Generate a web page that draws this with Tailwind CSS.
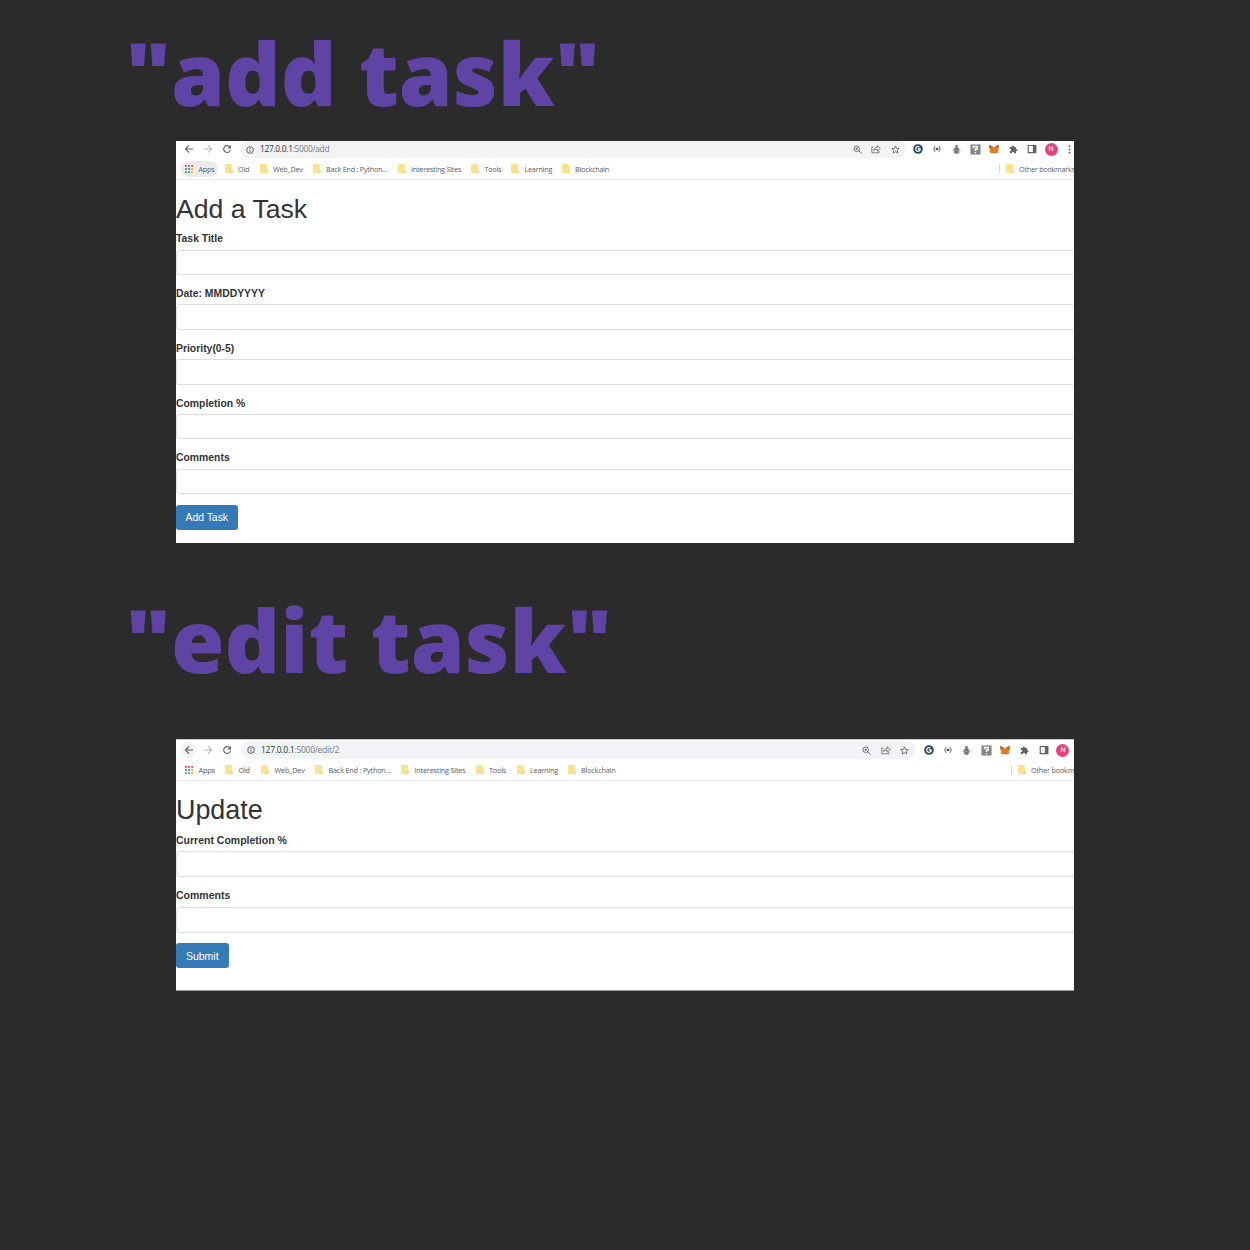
<!DOCTYPE html>
<html lang="en">
<head>
<meta charset="utf-8">
<title>Task forms</title>
<script src="https://cdn.jsdelivr.net/npm/@tailwindcss/browser@4"></script>
</head>
<body class="bg-[#2b2b2b]">
<svg class="hidden">
  <symbol id="back" viewBox="0 0 24 24"><path fill="none" stroke="currentColor" stroke-width="2.6" d="M22 12H4M12 3.500 3.500 12l8.500 8.500"/></symbol>
  <symbol id="fwd" viewBox="0 0 24 24"><path fill="none" stroke="currentColor" stroke-width="2.6" d="M2 12h18M12 3.500l8.500 8.500-8.500 8.500"/></symbol>
  <symbol id="reload" viewBox="0 0 24 24"><path fill="none" stroke="currentColor" stroke-width="2.6" d="M19 7.5A8.2 8.2 0 1 0 20.200 14"/><path fill="currentColor" d="M21.500 2.500v8.500h-8.500z"/></symbol>
  <symbol id="info" viewBox="0 0 24 24"><circle cx="12" cy="12" r="10" fill="none" stroke="currentColor" stroke-width="3"/><path stroke="currentColor" stroke-width="3" d="M12 11v6.500M12 6v3"/></symbol>
  <symbol id="apps" viewBox="0 0 9 9"><path fill="#e8453c" d="M0 0h2v2H0zM3.500 0h2v2h-2zM7 0h2v2H7z"/><path fill="#34a853" d="M0 3.500h2v2H0z"/><path fill="#4285f4" d="M3.500 3.500h2v2h-2z"/><path fill="#f5b32b" d="M7 3.500h2v2H7zM7 7h2v2H7z"/><path fill="#34a853" d="M0 7h2v2H0zM3.500 7h2v2h-2z"/></symbol>
  <symbol id="folder" viewBox="0 0 8 9"><path fill="#ffe290" d="M.8 0h5.400q.8 0 .8.800V6l.7.600V8.200q0 .8-.8.800H.8Q0 9 0 8.200V.8Q0 0 .8 0z"/><path fill="#fad777" d="M5.600 7.200 7 6l.7.600v1.600q0 .8-.8.800h-1.300z"/></symbol>
  <symbol id="zoom" viewBox="0 0 24 24"><g fill="none" stroke="currentColor" stroke-width="2.300"><circle cx="10" cy="10" r="7.500"/><path d="m15 15 8 8M6.500 10h7M10 6.500v7"/></g></symbol>
  <symbol id="share" viewBox="0 0 24 24"><g fill="none" stroke="currentColor" stroke-width="1.900"><path d="M6 7H2v14h17v-5"/><path d="M6 16c1-5 4-7.500 9-7.500V4l7.500 6.500L15 17v-4.500c-4 0-6.500 1-9 3.500z"/></g></symbol>
  <symbol id="star" viewBox="0 0 24 24"><path fill="none" stroke="currentColor" stroke-width="2.300" d="m12 2.500 2.900 6.500 7 .7-5.300 4.700 1.600 7L12 17.700 5.800 21.400l1.600-7L2.100 9.700l7-.7z"/></symbol>
  <symbol id="ring" viewBox="0 0 24 24"><circle cx="12" cy="12" r="11.500" fill="#2b4a63"/><path fill="none" stroke="#fff" stroke-width="3" d="M15.500 7.500A5.600 5.600 0 1 0 17.500 13H12.500"/><circle cx="14" cy="11" r="2" fill="#fff"/></symbol>
  <symbol id="braces" viewBox="0 0 24 24"><g fill="none" stroke="#4d4f52" stroke-width="2.600"><path d="M7 4Q4 4 4 8 4 12 1.500 12 4 12 4 16 4 20 7 20M17 4q3 0 3 4 0 4 2.500 4-2.500 0-2.500 4 0 4-3 4"/></g><path fill="#4d4f52" d="M8 8.500h8v7H8z"/></symbol>
  <symbol id="bug" viewBox="0 0 24 24"><g fill="#777"><path d="M9 0h6v6H9z"/><ellipse cx="12" cy="14.500" rx="7" ry="9"/></g><path fill="none" stroke="#999" stroke-width="2" d="M2 9l5 3M22 9l-5 3M1 14.500h22M3 20l4-3M21 20l-4-3"/></symbol>
  <symbol id="quest" viewBox="0 0 24 24"><path fill="#858585" d="M1 1h22v22H1z"/><path fill="none" stroke="#fff" stroke-width="3" d="M7.500 9V5.500h8.500V11h-4v4.500"/><path fill="#fff" d="M10.500 17.500h3v3h-3z"/></symbol>
  <symbol id="fox" viewBox="0 0 24 24"><path fill="#e8812c" d="m1 1.500 8 5h6l8-5 .5 9-2 4 1.500 5-5 3-4-1h-4l-4 1-5-3 1.500-5L.500 10.500z"/><path fill="#b3601f" d="m1 1.500 8 5-4 2.500-4 1zM23 1.500l-8 5 4 2.500 4 1z"/><path fill="#5b4a40" d="m6 12.500 4 2-3 .5zM18 12.500l-4 2 3 .5zM10 19h4l-.500 2h-3z"/></symbol>
  <symbol id="puzzle" viewBox="0 0 24 24"><path fill="#5f6368" d="M20.500 11H19V7a2 2 0 0 0-2-2h-4V3.500a2.500 2.500 0 0 0-5 0V5H4a2 2 0 0 0-2 2v3.800h1.500a2.700 2.700 0 0 1 0 5.400H2V20a2 2 0 0 0 2 2h3.800v-1.500a2.700 2.700 0 0 1 5.400 0V22H17a2 2 0 0 0 2-2v-4h1.500a2.500 2.500 0 0 0 0-5z"/></symbol>
  <symbol id="side" viewBox="0 0 24 24"><path fill="none" stroke="#5f6368" stroke-width="2.800" d="M3 3.500h18v17H3z"/><path fill="#5f6368" d="M14 3h8v18h-8z"/></symbol>
  <symbol id="dots" viewBox="0 0 24 24"><g fill="#5f6368"><circle cx="12" cy="3.500" r="2.600"/><circle cx="12" cy="12" r="2.600"/><circle cx="12" cy="20.500" r="2.600"/></g></symbol>
</svg>

<main class="flex h-[1250px] w-[1250px] flex-col overflow-hidden border-b border-[#30272b] font-['Liberation_Sans',sans-serif] text-[#333]">
  <h2 class="h-[141px] pt-[13px] pl-[125.500px] font-['Open_Sans',sans-serif] text-[86.700px] leading-[119px] font-extrabold whitespace-nowrap text-[#5f43a5]">"add task"</h2>

  <section class="ml-[176px] h-[402px] w-[897.500px] shrink-0 overflow-hidden bg-white">
    <div class="flex h-[17px] items-center text-[#5f6368]">
      <div class="flex h-[16px] w-[64px] shrink-0 items-center self-start pl-2">
        <svg class="mr-[9px] size-[10px]"><use href="#back"/></svg>
        <svg class="mr-[9px] size-[10px] text-[#b8babd]"><use href="#fwd"/></svg>
        <svg class="size-[10px]"><use href="#reload"/></svg>
      </div>
      <div class="flex h-[17px] w-[666px] shrink-0 items-center rounded-full bg-[#f1f3f4] pl-[6px]">
        <svg class="mr-[6px] size-[8px]"><use href="#info"/></svg>
        <span class="font-['Open_Sans',sans-serif] text-[8.400px] leading-none tracking-[-0.300px] text-[#777b80]"><span class="text-[#303134]">127.0.0.1</span>:5000/add</span>
        <div class="mr-[1.500px] ml-auto flex h-[16px] items-center self-start">
          <span class="flex w-[19px] justify-center"><svg class="size-[9px]"><use href="#zoom"/></svg></span>
          <span class="flex w-[19px] justify-center"><svg class="size-[10px]"><use href="#share"/></svg></span>
          <span class="flex w-[19px] justify-center"><svg class="size-[9px]"><use href="#star"/></svg></span>
        </div>
      </div>
      <div class="ml-[2.500px] flex h-[16px] shrink-0 items-center self-start">
        <span class="flex w-[19px] justify-center"><svg class="size-[10px]"><use href="#ring"/></svg></span>
        <span class="flex w-[19px] justify-center"><svg class="size-[8px]"><use href="#braces"/></svg></span>
        <span class="flex w-[19px] justify-center"><svg class="size-[9px]"><use href="#bug"/></svg></span>
        <span class="flex w-[19px] justify-center"><svg class="size-[11px]"><use href="#quest"/></svg></span>
        <span class="flex w-[19px] justify-center"><svg class="size-[10px]"><use href="#fox"/></svg></span>
        <span class="flex w-[19px] justify-center"><svg class="size-[9px]"><use href="#puzzle"/></svg></span>
        <span class="flex w-[19px] justify-center"><svg class="size-[10px]"><use href="#side"/></svg></span>
        <span class="flex w-[19px] justify-center"><span class="flex size-[13px] items-center justify-center rounded-full bg-[#ec407a] font-['Roboto',sans-serif] text-[7px] text-white">N</span></span>
        <span class="flex w-[18px] justify-center"><svg class="size-[9px]"><use href="#dots"/></svg></span>
      </div>
    </div>
    <div class="flex h-[22px] items-center border-b border-[#e8eaed] pl-[5px] font-['Open_Sans',sans-serif] text-[7.200px] leading-[12px] tracking-[-0.210px] whitespace-nowrap text-[#5a5d61]">
      <span class="mr-[6.500px] flex h-4 w-[37px] shrink-0 items-center rounded-full bg-[#ebebeb] pl-1"><svg class="mr-[5.500px] size-[8px]"><use href="#apps"/></svg><span class="pt-px">Apps</span></span>
      <span class="flex w-[35px] shrink-0 items-center"><svg class="mr-[5.500px] h-[9px] w-[8px]"><use href="#folder"/></svg><span class="pt-px">Old</span></span>
      <span class="flex w-[53px] shrink-0 items-center"><svg class="mr-[5.500px] h-[9px] w-[8px]"><use href="#folder"/></svg><span class="pt-px">Web_Dev</span></span>
      <span class="flex w-[85px] shrink-0 items-center"><svg class="mr-[5.500px] h-[9px] w-[8px]"><use href="#folder"/></svg><span class="pt-px">Back End : Python...</span></span>
      <span class="flex w-[73.500px] shrink-0 items-center"><svg class="mr-[5.500px] h-[9px] w-[8px]"><use href="#folder"/></svg><span class="pt-px">Interesting Sites</span></span>
      <span class="flex w-[40px] shrink-0 items-center"><svg class="mr-[5.500px] h-[9px] w-[8px]"><use href="#folder"/></svg><span class="pt-px">Tools</span></span>
      <span class="flex w-[50.500px] shrink-0 items-center"><svg class="mr-[5.500px] h-[9px] w-[8px]"><use href="#folder"/></svg><span class="pt-px">Learning</span></span>
      <span class="flex w-[437px] shrink-0 items-center"><svg class="mr-[5.500px] h-[9px] w-[8px]"><use href="#folder"/></svg><span class="pt-px">Blockchain</span></span>
      <span class="flex h-[9px] shrink-0 items-center border-l border-[#d5d7da] pl-[6px]"><svg class="mr-[5.500px] h-[9px] w-[8px]"><use href="#folder"/></svg><span class="pt-px">Other bookmarks</span></span>
    </div>
    <h1 class="mt-[14px] h-[39px] text-[26.600px] leading-[30px]">Add a Task</h1>
    <div class="h-[54.750px] w-[910px]"><label class="block h-[16.500px] text-[10.400px] leading-[12px] font-bold">Task Title</label><div class="h-[25.500px] rounded-[3px] border border-[#dedede]"></div></div>
    <div class="h-[54.750px] w-[910px]"><label class="block h-[16.500px] text-[10.400px] leading-[12px] font-bold">Date: MMDDYYYY</label><div class="h-[25.500px] rounded-[3px] border border-[#dedede]"></div></div>
    <div class="h-[54.750px] w-[910px]"><label class="block h-[16.500px] text-[10.400px] leading-[11px] font-bold">Priority(0-5)</label><div class="h-[25.500px] rounded-[3px] border border-[#dedede]"></div></div>
    <div class="h-[54.750px] w-[910px]"><label class="block h-[16.500px] text-[10.400px] leading-[13px] font-bold">Completion %</label><div class="h-[25.500px] rounded-[3px] border border-[#dedede]"></div></div>
    <div class="h-[52.500px] w-[910px]"><label class="block h-[16.500px] text-[10.400px] leading-[12px] font-bold">Comments</label><div class="h-[25.500px] rounded-[3px] border border-[#dedede]"></div></div>
    <button class="block h-[25.500px] w-[61.500px] rounded-[3px] bg-[#337ab7] pt-[1.500px] text-[10.400px] leading-none text-white">Add Task</button>
  </section>

  <h2 class="h-[195.500px] pt-[37px] pl-[125.500px] font-['Open_Sans',sans-serif] text-[86.700px] leading-[119px] font-extrabold whitespace-nowrap text-[#5f43a5]">"edit task"</h2>

  <section class="ml-[176px] h-[252.500px] w-[897.500px] shrink-0 overflow-hidden border-t border-b border-t-[#c8c8c8] border-b-[#999] bg-white">
    <div class="flex h-[20px] items-center pt-[1px] text-[#5f6368]">
      <div class="flex w-[65px] shrink-0 items-center pl-[5px]">
        <span class="mr-[6px] flex size-[16px] items-center justify-center rounded-full bg-[#f1f3f4]"><svg class="size-[10px]"><use href="#back"/></svg></span>
        <svg class="mr-[9px] size-[10px] text-[#b8babd]"><use href="#fwd"/></svg>
        <svg class="size-[10px]"><use href="#reload"/></svg>
      </div>
      <div class="flex h-[18px] w-[675px] shrink-0 items-center rounded-full bg-[#f1f3f4] pl-[6px]">
        <svg class="mr-[6px] size-[8px]"><use href="#info"/></svg>
        <span class="pt-px font-['Open_Sans',sans-serif] text-[8.500px] leading-none tracking-[-0.270px] text-[#777b80]"><span class="text-[#303134]">127.0.0.1</span>:5000/edit/2</span>
        <div class="mr-[1.500px] ml-auto flex items-center">
          <span class="flex w-[19.200px] justify-center"><svg class="size-[9px]"><use href="#zoom"/></svg></span>
          <span class="flex w-[19.200px] justify-center"><svg class="size-[10px]"><use href="#share"/></svg></span>
          <span class="flex w-[19.200px] justify-center"><svg class="size-[9px]"><use href="#star"/></svg></span>
        </div>
      </div>
      <div class="ml-[3px] flex shrink-0 items-center">
        <span class="flex w-[19.200px] justify-center"><svg class="size-[10px]"><use href="#ring"/></svg></span>
        <span class="flex w-[19.200px] justify-center"><svg class="size-[8px]"><use href="#braces"/></svg></span>
        <span class="flex w-[19.200px] justify-center"><svg class="size-[9px]"><use href="#bug"/></svg></span>
        <span class="flex w-[19.200px] justify-center"><svg class="size-[11px]"><use href="#quest"/></svg></span>
        <span class="flex w-[19.200px] justify-center"><svg class="size-[10px]"><use href="#fox"/></svg></span>
        <span class="flex w-[19.200px] justify-center"><svg class="size-[9px]"><use href="#puzzle"/></svg></span>
        <span class="flex w-[19.200px] justify-center"><svg class="size-[10px]"><use href="#side"/></svg></span>
        <span class="flex w-[19.200px] justify-center"><span class="flex size-[13px] items-center justify-center rounded-full bg-[#ec407a] font-['Roboto',sans-serif] text-[7px] text-white">N</span></span>
      </div>
    </div>
    <div class="flex h-[21.500px] items-center border-b border-[#e8eaed] pl-[9px] font-['Open_Sans',sans-serif] text-[7.300px] leading-[12px] tracking-[-0.210px] whitespace-nowrap text-[#5a5d61]">
      <span class="flex w-[40px] shrink-0 items-center"><svg class="mr-[5.500px] size-[8px]"><use href="#apps"/></svg>Apps</span>
      <span class="flex w-[36px] shrink-0 items-center"><svg class="mr-[5.500px] h-[9px] w-[8px]"><use href="#folder"/></svg>Old</span>
      <span class="flex w-[54px] shrink-0 items-center"><svg class="mr-[5.500px] h-[9px] w-[8px]"><use href="#folder"/></svg>Web_Dev</span>
      <span class="flex w-[86px] shrink-0 items-center"><svg class="mr-[5.500px] h-[9px] w-[8px]"><use href="#folder"/></svg>Back End : Python...</span>
      <span class="flex w-[74.500px] shrink-0 items-center"><svg class="mr-[5.500px] h-[9px] w-[8px]"><use href="#folder"/></svg>Interesting Sites</span>
      <span class="flex w-[41px] shrink-0 items-center"><svg class="mr-[5.500px] h-[9px] w-[8px]"><use href="#folder"/></svg>Tools</span>
      <span class="flex w-[51px] shrink-0 items-center"><svg class="mr-[5.500px] h-[9px] w-[8px]"><use href="#folder"/></svg>Learning</span>
      <span class="flex w-[443px] shrink-0 items-center"><svg class="mr-[5.500px] h-[9px] w-[8px]"><use href="#folder"/></svg>Blockchain</span>
      <span class="flex h-[9px] shrink-0 items-center border-l border-[#d5d7da] pl-[6px]"><svg class="mr-[5.500px] h-[9px] w-[8px]"><use href="#folder"/></svg>Other bookmarks</span>
    </div>
    <h1 class="mt-[14px] h-[39px] text-[26.900px] leading-[31px]">Update</h1>
    <div class="h-[55.500px] w-[910px]"><label class="block h-[17px] text-[10.500px] leading-[12px] font-bold">Current Completion %</label><div class="h-[26px] rounded-[3px] border border-[#dedede]"></div></div>
    <div class="h-[53px] w-[910px]"><label class="block h-[17px] text-[10.500px] leading-[11px] font-bold">Comments</label><div class="h-[26px] rounded-[3px] border border-[#dedede]"></div></div>
    <button class="block h-[25.500px] w-[52.500px] rounded-[3px] bg-[#337ab7] pt-[1.500px] text-[10.500px] leading-none text-white">Submit</button>
  </section>
</main>
</body>
</html>
